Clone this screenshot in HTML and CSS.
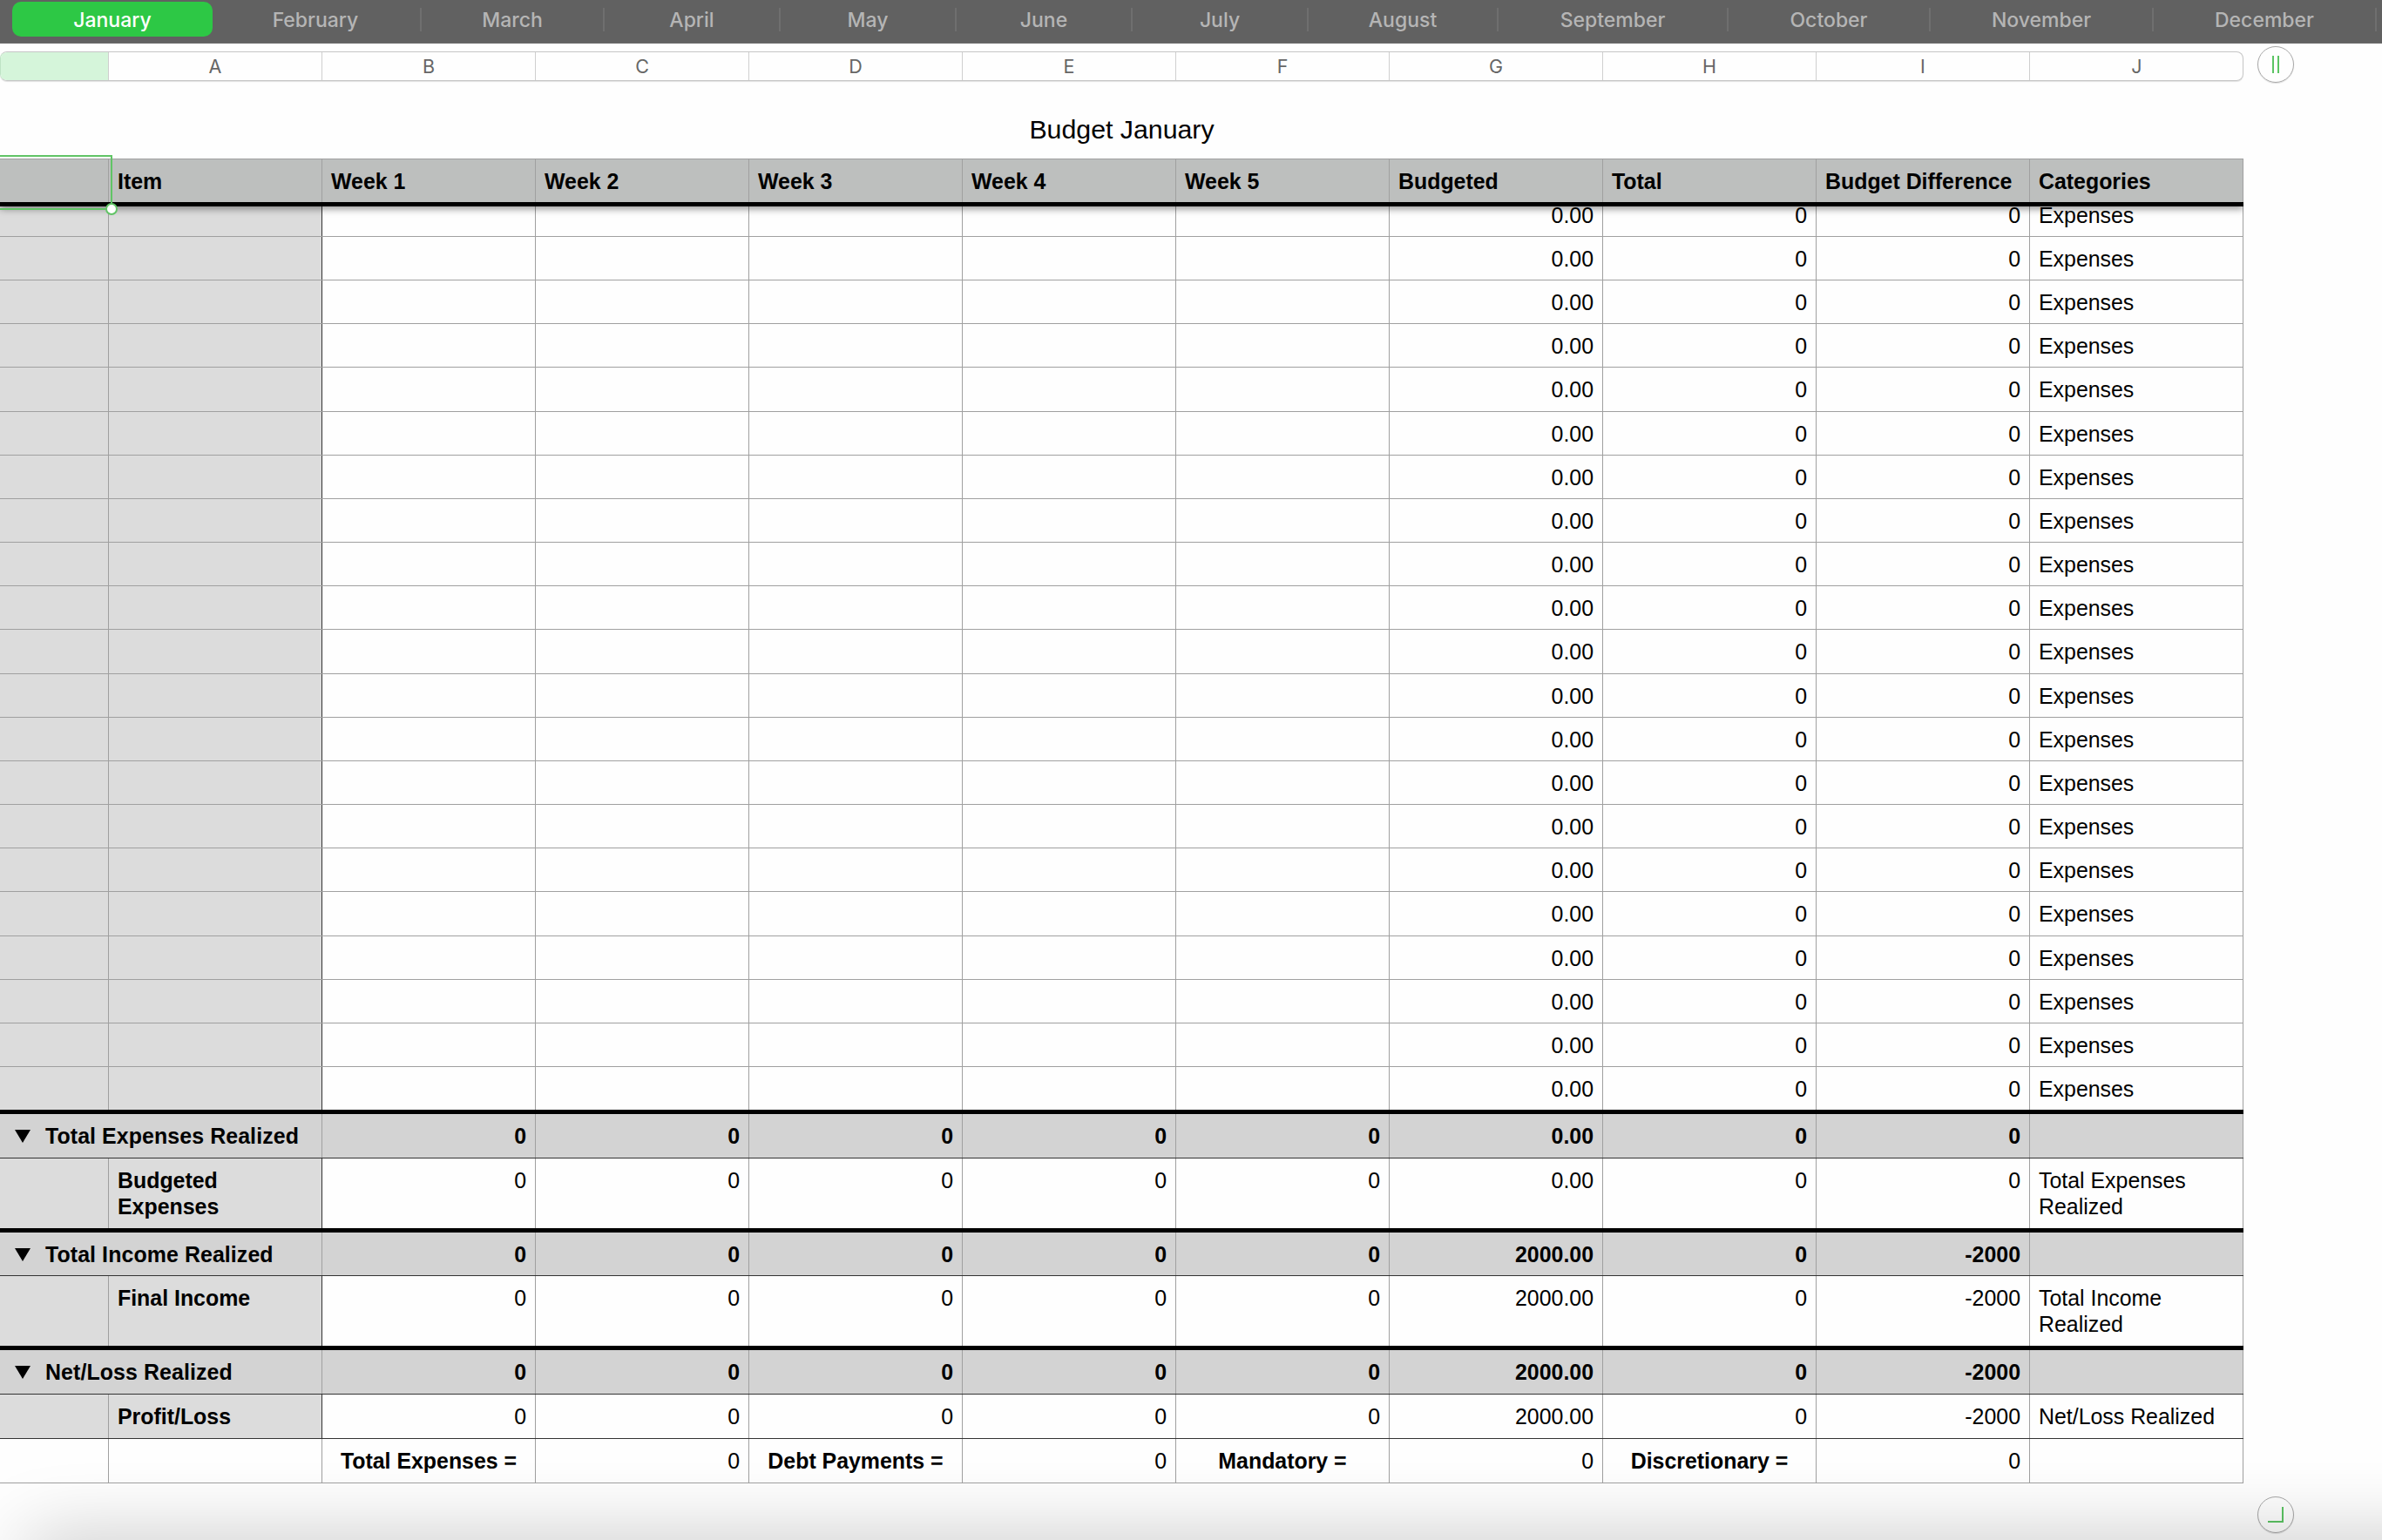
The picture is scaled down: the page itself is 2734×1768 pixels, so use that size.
FILE: index.html
```html
<!DOCTYPE html>
<html lang="en">
<head>
    <title>Budget January</title>
    <meta charset="utf-8">
    <meta name="viewport" content="width=device-width, initial-scale=1">
    <link rel="stylesheet" href="styles.css">
</head>
<body>
    <nav class="tabs">
        <a class="tab active">January</a>
        <a class="tab">February</a>
        <a class="tab">March</a>
        <a class="tab">April</a>
        <a class="tab">May</a>
        <a class="tab">June</a>
        <a class="tab">July</a>
        <a class="tab">August</a>
        <a class="tab">September</a>
        <a class="tab">October</a>
        <a class="tab">November</a>
        <a class="tab">December</a>
    </nav>
    <main class="sheet">
        <div class="ruler">
            <div class="letters">
                <span class="selected"></span>
                <span>A</span><span>B</span><span>C</span><span>D</span><span>E</span>
                <span>F</span><span>G</span><span>H</span><span>I</span><span>J</span>
            </div>
            <button class="round">
                <svg width="20" height="20" viewBox="0 0 20 20"><path d="M7 0V20M13 0V20" /></svg>
            </button>
        </div>
        <h1 class="title">Budget January</h1>
        <div class="table">
            <div class="row head">
                <div></div>
                <div>Item</div>
                <div>Week 1</div>
                <div>Week 2</div>
                <div>Week 3</div>
                <div>Week 4</div>
                <div>Week 5</div>
                <div>Budgeted</div>
                <div>Total</div>
                <div>Budget Difference</div>
                <div>Categories</div>
            </div>
            <div class="rows" id="rows"></div>
            <div class="selection"><i class="handle"></i></div>
        </div>
        <button class="round corner">
            <svg width="20" height="20" viewBox="0 0 20 20"><path d="M1 18H18V1" /></svg>
        </button>
    </main>
    <div class="fade"></div>
    <script>
        const rows = document.getElementById('rows');

        function addRow(type, cells) {
            const row = document.createElement('div');
            row.className = 'row ' + type;
            cells.forEach(text => {
                const cell = document.createElement('div');
                cell.textContent = text;
                row.appendChild(cell);
            });
            rows.appendChild(row);
        }

        for (let i = 0; i < 21; i++) {
            addRow('expense', ['', '', '', '', '', '', '', '0.00', '0', '0', 'Expenses']);
        }

        addRow('group', ['Total Expenses Realized', '0', '0', '0', '0', '0', '0.00', '0', '0', '']);
        addRow('tall', ['', 'Budgeted Expenses', '0', '0', '0', '0', '0', '0.00', '0', '0', 'Total Expenses Realized']);
        addRow('group second', ['Total Income Realized', '0', '0', '0', '0', '0', '2000.00', '0', '-2000', '']);
        addRow('tall', ['', 'Final Income', '0', '0', '0', '0', '0', '2000.00', '0', '-2000', 'Total Income Realized']);
        addRow('group', ['Net/Loss Realized', '0', '0', '0', '0', '0', '2000.00', '0', '-2000', '']);
        addRow('last', ['', 'Profit/Loss', '0', '0', '0', '0', '0', '2000.00', '0', '-2000', 'Net/Loss Realized']);
        addRow('footer', ['', '', 'Total Expenses =', '0', 'Debt Payments =', '0', 'Mandatory =', '0', 'Discretionary =', '0', '']);
    </script>
</body>
</html>
```

FILE: styles.css
```css
* {
    box-sizing: border-box;
}
body {
    font-family: 'Liberation Sans', Arial, sans-serif;
    margin: 0;
    height: 1768px;
    overflow: hidden;
    position: relative;
    background: #fefefe;
    color: #000;
}
.tabs {
    display: grid;
    grid-template-columns: 242px 242px 210px 202px 202px 202px 202px 218px 264px 232px 256px 256px;
    height: 50px;
    background: #616161;
    border-bottom: 1px solid #6b6b6b;
    font-family: Inter, sans-serif;
    font-size: 23px;
    font-weight: 500;
    color: #b5b5b5;
}
.tab {
    height: 27px;
    margin-top: 9px;
    border-right: 2px solid #6f6f6f;
    line-height: 28px;
    text-align: center;
}
.tab.active {
    height: 40px;
    width: 230px;
    margin: 2px 0 0 14px;
    border: none;
    border-radius: 10px;
    line-height: 42px;
    background: #2dc845;
    color: #fff;
}
.ruler {
    display: flex;
    gap: 16px;
    height: 68px;
    padding-top: 2px;
}
.letters {
    display: grid;
    grid-template-columns: 124px repeat(10, 245px);
    width: 2575px;
    height: 34px;
    margin-top: 7px;
    border: 1px solid #c6c6c6;
    border-left-color: #bfe3c5;
    border-radius: 8px;
    overflow: hidden;
    box-shadow: 0 1px 1px rgba(0, 0, 0, 0.12);
    font-family: Inter, sans-serif;
    font-size: 21.5px;
    line-height: 33px;
    text-align: center;
    color: #666;
}
.letters span {
    border-right: 1px solid #cfcfcf;
}
.letters span:last-child {
    border-right: none;
}
.letters .selected {
    background: #d5f5da;
}
.round {
    display: flex;
    justify-content: center;
    align-items: center;
    width: 42px;
    height: 42px;
    padding: 0;
    border: 1px solid #a8a8a8;
    border-radius: 50%;
    background: none;
    box-shadow: 0 1px 1px rgba(0, 0, 0, 0.12);
}
.ruler .round {
    margin-top: 1px;
}
.round path {
    fill: none;
    stroke: #5bc463;
    stroke-width: 2;
}
.title {
    width: 2575px;
    height: 64px;
    margin: 0;
    padding-top: 13px;
    font-size: 30.3px;
    font-weight: normal;
    line-height: 36px;
    text-align: center;
}
.table {
    position: relative;
    width: 2575px;
    font-size: 24.9px;
    line-height: 30px;
}
.row {
    display: grid;
    grid-template-columns: 125px repeat(10, 245px);
    border-bottom: 1px solid #a0a0a0;
}
.row > div {
    padding: 10px 10px 0;
    border-right: 1px solid #a0a0a0;
    text-align: right;
}
.row > div:last-child {
    text-align: left;
}
.head {
    position: relative;
    z-index: 1;
    height: 55px;
    border-top: 1px solid #a0a0a0;
    border-bottom: 5px solid #000;
    background: #bdbfbe;
    font-weight: bold;
    box-shadow: 0 3px 8px rgba(0, 0, 0, 0.4);
    clip-path: inset(0 0 -16px 0);
}
.row.head > div {
    padding-right: 0;
    text-align: left;
    white-space: nowrap;
}
.rows {
    overflow: hidden;
}
.expense {
    height: 50.16px;
}
/* first visible row is scrolled partly under the header */
.expense:first-child {
    margin-top: -15.16px;
}
.expense:nth-child(21) {
    height: 49px;
    border-bottom: none;
}
.expense > div:nth-child(-n+2),
.tall > div:nth-child(-n+2),
.last > div:nth-child(-n+2) {
    background: #dcdcdc;
}
.expense > div:nth-child(2),
.tall > div:nth-child(2),
.last > div:nth-child(2) {
    border-right-color: #333;
    font-weight: bold;
    text-align: left;
}
.tall {
    height: 80px;
    border-bottom: none;
}
.last {
    height: 51px;
    border-bottom-color: #333;
}
.group {
    grid-template-columns: 370px repeat(9, 245px);
    height: 56px;
    border-top: 5px solid #000;
    border-bottom-color: #333;
    background: #d3d3d3;
    font-weight: bold;
}
.group.second {
    height: 55px;
}
.row.group > div:first-child {
    display: flex;
    padding-left: 17px;
    gap: 17px;
    letter-spacing: 0.1px;
}
.group > div:first-child::before {
    content: '';
    width: 18px;
    height: 15px;
    margin-top: 8px;
    background: #000;
    clip-path: polygon(0 0, 100% 0, 50% 100%);
}
.footer {
    height: 51px;
}
.footer > div:nth-child(2n+3) {
    font-weight: bold;
    text-align: center;
}
.selection {
    position: absolute;
    z-index: 2;
    top: -4px;
    left: -4px;
    width: 133px;
    height: 63px;
    border: 2px solid #61c466;
}
.handle {
    position: absolute;
    right: -8px;
    bottom: -8px;
    width: 14px;
    height: 14px;
    border: 2px solid #61c466;
    border-radius: 50%;
    background: #fff;
}
.corner {
    margin: 15px 0 0 2591px;
}
/* soft shadow along the bottom edge of the window */
.fade {
    position: absolute;
    left: 36px;
    right: -100px;
    bottom: -60px;
    height: 60px;
    box-shadow: 0 0 84px 4px rgba(0, 0, 0, 0.22);
    pointer-events: none;
}
```
